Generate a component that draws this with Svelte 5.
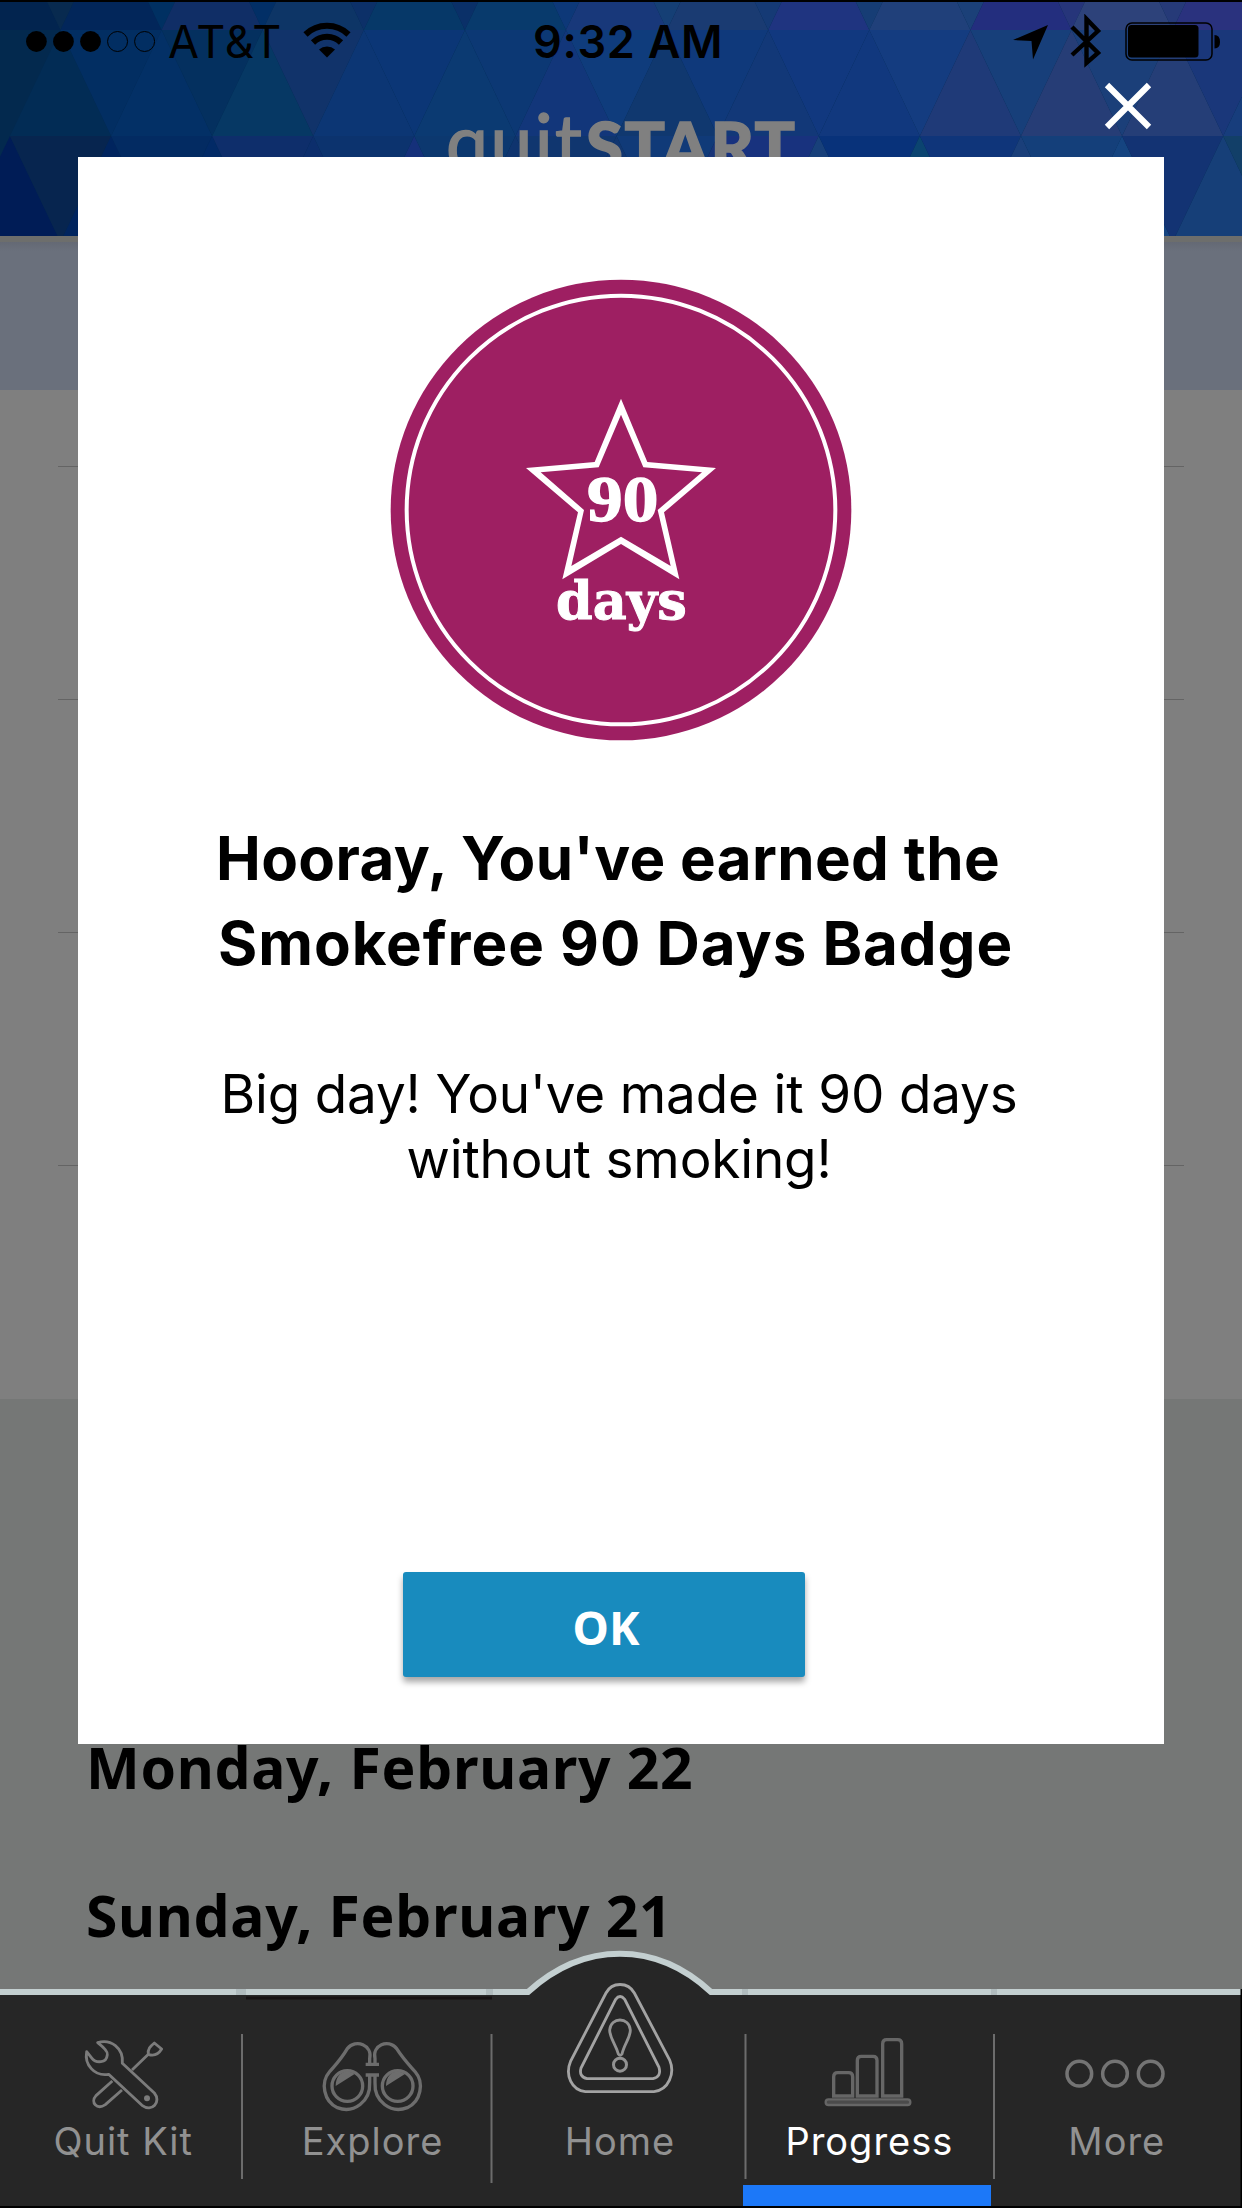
<script>
    const step = 101.1;

    // header mosaic: every row alternates up and down triangles
    const rows = [
        {
            top: -76, bottom: 30, shift: -40.6,
            up: ['#02244f', '#02265a', '#102e66', '#0d3566', '#063868', '#083a6c', '#18387a', '#1a3b72', '#1f3480', '#20407a', '#232e7e', '#2d427a', '#2a327e'],
            down: ['#082a4f', '#003062', '#022f66', '#0c3068', '#0a3068', '#0d3878', '#153f75', '#153a75', '#163d75', '#1b4078', '#26357a', '#263a78', '#2a327e']
        },
        {
            top: 30, bottom: 136, shift: 10,
            up: ['#022c55', '#033066', '#063864', '#0c3674', '#0b3a72', '#12367a', '#10386f', '#123878', '#11387e', '#1f3a78', '#263d76', '#253e77', '#173d7c'],
            down: ['#022e62', '#04305f', '#11336a', '#0b3676', '#0c3874', '#0f3c7c', '#0f397b', '#11387f', '#143c80', '#173f7a', '#1b3f79', '#1a377a', '#173d7c']
        },
        {
            top: 136, bottom: 242, shift: -40.6,
            up: ['#001c56', '#00245e', '#022a66', '#0c2e6c', '#15307a', '#0f346e', '#12366f', '#183478', '#18407a', '#0b4470', '#1a3f7a', '#154480', '#163f78'],
            down: ['#07254f', '#032b62', '#0e2e6b', '#0c336e', '#0c386f', '#10366f', '#103a78', '#18327e', '#08327a', '#0f357a', '#143f7a', '#133373', '#123f68']
        }
    ];

    const triangles = rows.flatMap((row) =>
        row.up.flatMap((color, i) => {
            const x = row.shift + i * step;
            return [
                { color, points: `${x},${row.bottom} ${x + step / 2},${row.top} ${x + step},${row.bottom}` },
                { color: row.down[i], points: `${x + step / 2},${row.top} ${x + step * 1.5},${row.top} ${x + step},${row.bottom}` }
            ];
        })
    );

    const days = ['Monday, February 22', 'Sunday, February 21'];
    const dividers = [
        { x: 242, end: 190 },
        { x: 491.5, end: 194 },
        { x: 745.5, end: 190 },
        { x: 994, end: 190 }
    ];
    let open = true;
</script>

<div class="screen">
    <header>
        <svg class="mosaic" viewBox="0 0 1242 236" width="1242" height="236">
            <rect width="1242" height="236" fill="#03294e" />
            {#each triangles as t}
                <polygon points={t.points} fill={t.color} />
            {/each}
            <rect width="1242" height="2" fill="#000" />
            <g class="logo" fill="#808080" stroke="#808080" stroke-width="1.5">
                <text x="446" y="169" font-size="75" textLength="136">quit</text>
                <text x="586" y="171" font-size="67" font-weight="900" textLength="209">START</text>
            </g>
        </svg>
        <div class="status">
            <svg width="130" height="24" viewBox="0 0 130 24">
                {#each [0, 1, 2, 3, 4] as i}
                    <circle cx={11.4 + i * 27.05} cy="11.5" r={i < 3 ? 10.4 : 10} fill={i < 3 ? '#000' : 'none'} stroke="#000" stroke-width={i < 3 ? 0 : 1} />
                {/each}
            </svg>
            <span class="carrier">AT&amp;T</span>
            <svg class="wifi" width="48" height="36" viewBox="0 0 48 36">
                <path d="M2.5 12.500 A31 31 0 0 1 45.500 12.500" fill="none" stroke="#000" stroke-width="6" />
                <path d="M10 20.500 A20 20 0 0 1 38 20.500" fill="none" stroke="#000" stroke-width="6" />
                <path d="M16 27.500 A12 12 0 0 1 32 27.500 L24 35.500 Z" />
            </svg>
            <span class="time">9:32 AM</span>
            <svg class="indicators" width="210" height="56" viewBox="0 0 210 56">
                <path d="M0 26 L35 11 L20 45.500 L18.500 27 Z" />
                <path d="M59 13 L85 39 L73.500 49 V5 L85 17 L59 41" fill="none" stroke="#000" stroke-width="4.400" />
                <rect x="113" y="9" width="86" height="37" rx="6" fill="none" stroke="#000" stroke-width="1.500" />
                <rect x="115" y="11" width="70.500" height="32.500" rx="3.500" />
                <path d="M201.500 21 Q207 21 207 28 Q207 34 201.500 34.500 Z" />
            </svg>
        </div>
    </header>
    <div class="strip"></div>
    <div class="cards">
        <div class="card first"></div>
        <div class="card"></div>
        <div class="card"></div>
        <div class="card"></div>
    </div>
    <div class="days">
        {#each days as day}
            <div class="day">{day}</div>
        {/each}
    </div>

    {#if open}
        <button class="close" aria-label="Close" on:click={() => (open = false)}>
            <svg width="48" height="48" viewBox="0 0 48 48">
                <path d="M3 3 L45 45 M45 3 L3 45" stroke="#fff" stroke-width="6.200" />
            </svg>
        </button>
        <div class="modal">
            <svg class="badge" width="480" height="480" viewBox="0 0 1440 1440">
                <circle cx="723" cy="720" r="691" fill="#9e1f62" />
                <circle cx="723" cy="720" r="643" fill="none" stroke="#fff" stroke-width="12" />
                <path fill="#fff" fill-rule="evenodd" d="M723 386 L802 576 L1008 594 L852 727 L898 928 L723 822 L547 928 L594 727 L438 594 L644 576 Z M723 434 L656 592 L482 607 L612 720 L574 888 L723 800 L872 888 L833 720 L966 607 L790 592 Z" />
                <text class="count" x="728" y="753" textLength="214" lengthAdjust="spacingAndGlyphs">90</text>
                <text class="unit" x="724" y="1046" textLength="392" lengthAdjust="spacingAndGlyphs">days</text>
            </svg>
            <h1>
                <span>Hooray, You've earned the</span>
                <span class="wide">Smokefree 90 Days Badge</span>
            </h1>
            <p>Big day! You've made it 90 days<br />without smoking!</p>
            <button class="ok" on:click={() => (open = false)}>OK</button>
        </div>
    {/if}

    <nav>
        <svg class="frame" width="1242" height="258" viewBox="0 -39 1242 258">
            <path d="M0 3 H528 C584 -49 656 -49 711 3 H1242 V217 H0 Z" fill="#262626" />
            <path d="M246 9 H492" stroke="#161213" stroke-width="3" />
            <path d="M0 3 H528 C584 -48 656 -48 711 3 H1242" fill="none" stroke="#c3cfd0" stroke-width="6" />
            <path d="M236 3 h10 M486 3 h7 M742 3 h6 M991 3 h6" stroke="#b0bcbe" stroke-width="6" />
            {#each dividers as d}
                <path d="M{d.x} 45 V{d.end}" stroke="#6c6c6c" stroke-width="2" />
            {/each}
            <rect x="743" y="196" width="248" height="21" fill="#1c78f8" />
            <path d="M0 218 H1242 M1241.500 0 V219" stroke="#000" stroke-width="2" />
        </svg>
        <div class="tab">
            <svg width="100" height="80" viewBox="222 290 300 240">
                <g fill="none" stroke="#7b7b7b" stroke-width="8.500" stroke-linejoin="round">
                    <path d="M296 310 C335 298 374 325 370 372 L466 461 C488 487 459 520 429 498 L329 405 C285 412 256 375 263 337 L279 357 Q288 369 306 367 Q323 366 325 346 Q328 335 296 310 Z" />
                    <path d="M399 392 L448 345 M448 345 C445 329 455 320 466 311 L488 329 C480 342 468 352 448 345 Z" />
                    <path d="M340 425 L291 469 C273 489 294 513 319 496 L369 452" />
                </g>
                <circle cx="444" cy="477" r="9" fill="#7b7b7b" />
            </svg>
            <span>Quit Kit</span>
        </div>
        <div class="tab explore">
            <svg width="110" height="80" viewBox="950 290 330 240">
                <g fill="none" stroke="#6d6d6d" stroke-width="10">
                    <path d="M1093 375 H1133 M1093 407 H1133 M1105 375 V358 C1114 318 1064 297 1038 328 C1018 362 1002 377 984 398 C957 429 967 487 1008 505 C1058 524 1108 486 1105 430 V407" />
                    <path d="M1121 375 V358 C1112 318 1160 297 1186 328 C1208 362 1224 377 1242 398 C1269 429 1259 487 1218 505 C1168 524 1118 486 1121 430 V407" />
                    <circle cx="1038" cy="440" r="46" />
                    <circle cx="1189" cy="440" r="46" />
                </g>
                <path d="M1003 440 C1003 400 1035 386 1060 404 Z M1154 440 C1154 400 1186 386 1211 404 Z" fill="#6d6d6d" />
            </svg>
            <span>Explore</span>
        </div>
        <div class="tab home">
            <svg width="110" height="114" viewBox="258 154 330 342">
                <g fill="none" stroke="#a3a3a3" stroke-width="8.500">
                    <path d="M381 187 C399 153 447 153 466 187 L572 388 C589 428 569 478 525 483 H319 C278 478 257 434 275 391 Z" />
                    <path d="M410 206 Q423 189 437 206 L540 410 Q548 438 522 444 H324 Q299 438 306 412 Z" />
                    <path d="M418 370 C410 340 392 322 392 298 C395 258 451 258 454 298 C454 322 436 340 429 370 Q423 378 418 370 Z" stroke="#929292" />
                    <circle cx="423" cy="402" r="19.500" stroke="#929292" stroke-width="9" />
                </g>
            </svg>
            <span>Home</span>
        </div>
        <div class="tab active">
            <svg width="100" height="80" viewBox="60 280 300 240">
                <g fill="none" stroke="#666" stroke-width="10">
                    <path d="M104 466 V408 Q104 396 116 396 H149 Q161 396 161 408 V466 Z" />
                    <path d="M175 466 V359 Q175 347 187 347 H222 Q234 347 234 359 V466 Z" />
                    <path d="M251 466 V309 Q251 297 263 297 H296 Q308 297 308 309 V466 Z" />
                    <rect x="80" y="476" width="254" height="17" rx="8.500" fill="#4b4b4b" stroke-width="7" />
                </g>
            </svg>
            <span>Progress</span>
        </div>
        <div class="tab more">
            <svg width="110" height="80" viewBox="784 280 330 240">
                <g fill="none" stroke="#747474" stroke-width="10.500">
                    <circle cx="836" cy="399" r="37" />
                    <circle cx="943" cy="399" r="37" />
                    <circle cx="1050" cy="399" r="37" />
                </g>
            </svg>
            <span>More</span>
        </div>
    </nav>
</div>

<style>
    :global(body) {
        margin: 0;
        background: #757776;
    }

    .screen {
        position: relative;
        width: 1242px;
        height: 2208px;
        overflow: hidden;
        background: #757776;
        font-family: 'Inter', sans-serif;
        color: #000;
    }

    header {
        position: relative;
        height: 236px;
    }

    svg {
        display: block;
        flex: none;
    }

    .mosaic {
        position: absolute;
        top: 0;
        left: 0;
    }

    .logo {
        font-family: 'Lato', sans-serif;
    }

    .status {
        position: relative;
        display: flex;
        align-items: center;
        height: 83px;
        padding: 0 19px 0 25px;
        font-size: 45px;
        white-space: nowrap;
    }

    .carrier {
        width: 134px;
        margin-left: 13px;
        letter-spacing: 1px;
    }

    .wifi {
        margin: -3px 0 0 1px;
    }

    .time {
        margin-left: 182px;
        font-weight: 600;
        letter-spacing: 0.7px;
    }

    .indicators {
        margin-left: auto;
    }

    .strip {
        height: 148px;
        border-top: 6px solid #6d6e6c;
        background: linear-gradient(#646974, #6a707c 9px);
    }

    .cards {
        height: 1009px;
        padding: 0 58px;
        box-sizing: border-box;
        background: #7f7f7f;
    }

    .card {
        height: 232px;
        border-bottom: 1px solid #646464;
    }

    .card.first {
        height: 76px;
    }

    .days {
        padding: 294px 0 0 86px;
        font-family: 'Noto Sans', sans-serif;
        font-size: 57px;
        font-weight: 700;
        letter-spacing: 0.7px;
    }

    .day {
        line-height: 148px;
    }

    button {
        padding: 0;
        border: 0;
        background: none;
    }

    .close {
        position: absolute;
        top: 82px;
        left: 1104px;
    }

    .modal {
        position: absolute;
        top: 157px;
        left: 78px;
        display: flex;
        flex-direction: column;
        align-items: center;
        width: 1086px;
        height: 1587px;
        background: #fff;
    }

    .badge {
        margin: 113px 3px 0 0;
    }

    .count,
    .unit {
        fill: #fff;
        font-weight: 700;
        text-anchor: middle;
    }

    .count {
        font-family: 'Liberation Serif', serif;
        font-size: 198px;
        stroke: #fff;
        stroke-width: 4px;
    }

    .unit {
        font-family: 'DejaVu Serif', serif;
        font-size: 156px;
        stroke: #fff;
        stroke-width: 3px;
    }

    h1 {
        display: flex;
        flex-direction: column;
        width: 820px;
        margin: 66px 0 0 10px;
        font-size: 60px;
        line-height: 85px;
        font-weight: 700;
        letter-spacing: 0.36px;
        white-space: nowrap;
    }

    .wide {
        padding-left: 2px;
        letter-spacing: 0.95px;
    }

    p {
        margin: 76px 4px 0 0;
        font-size: 53px;
        line-height: 65px;
        letter-spacing: -0.15px;
        text-align: center;
        white-space: nowrap;
    }

    .ok {
        width: 402px;
        height: 105px;
        margin: 380px 34px 0 0;
        padding: 4px 0 0 4px;
        border-radius: 3px;
        background: #188bbe;
        box-shadow: 0 5px 6px rgba(0, 0, 0, 0.35);
        color: #fff;
        font: 700 46px 'Noto Sans', sans-serif;
    }

    nav {
        position: absolute;
        bottom: 0;
        left: 0;
        display: grid;
        grid-template: 219px / repeat(5, 1fr);
        width: 1242px;
        height: 219px;
    }

    .frame {
        position: absolute;
        bottom: 0;
        left: 0;
    }

    .tab {
        position: relative;
        display: flex;
        flex-direction: column;
        align-items: center;
        justify-content: flex-end;
        box-sizing: border-box;
        height: 219px;
        padding: 0 2px 42px 0;
        color: #919191;
        font-size: 38px;
        line-height: 50px;
        letter-spacing: 1px;
    }

    .home svg {
        margin-bottom: 20px;
    }

    .explore {
        padding-right: 0;
    }

    .active {
        padding-right: 0;
        color: #fff;
    }

    .active svg,
    .more svg {
        margin-bottom: 2px;
    }
</style>
